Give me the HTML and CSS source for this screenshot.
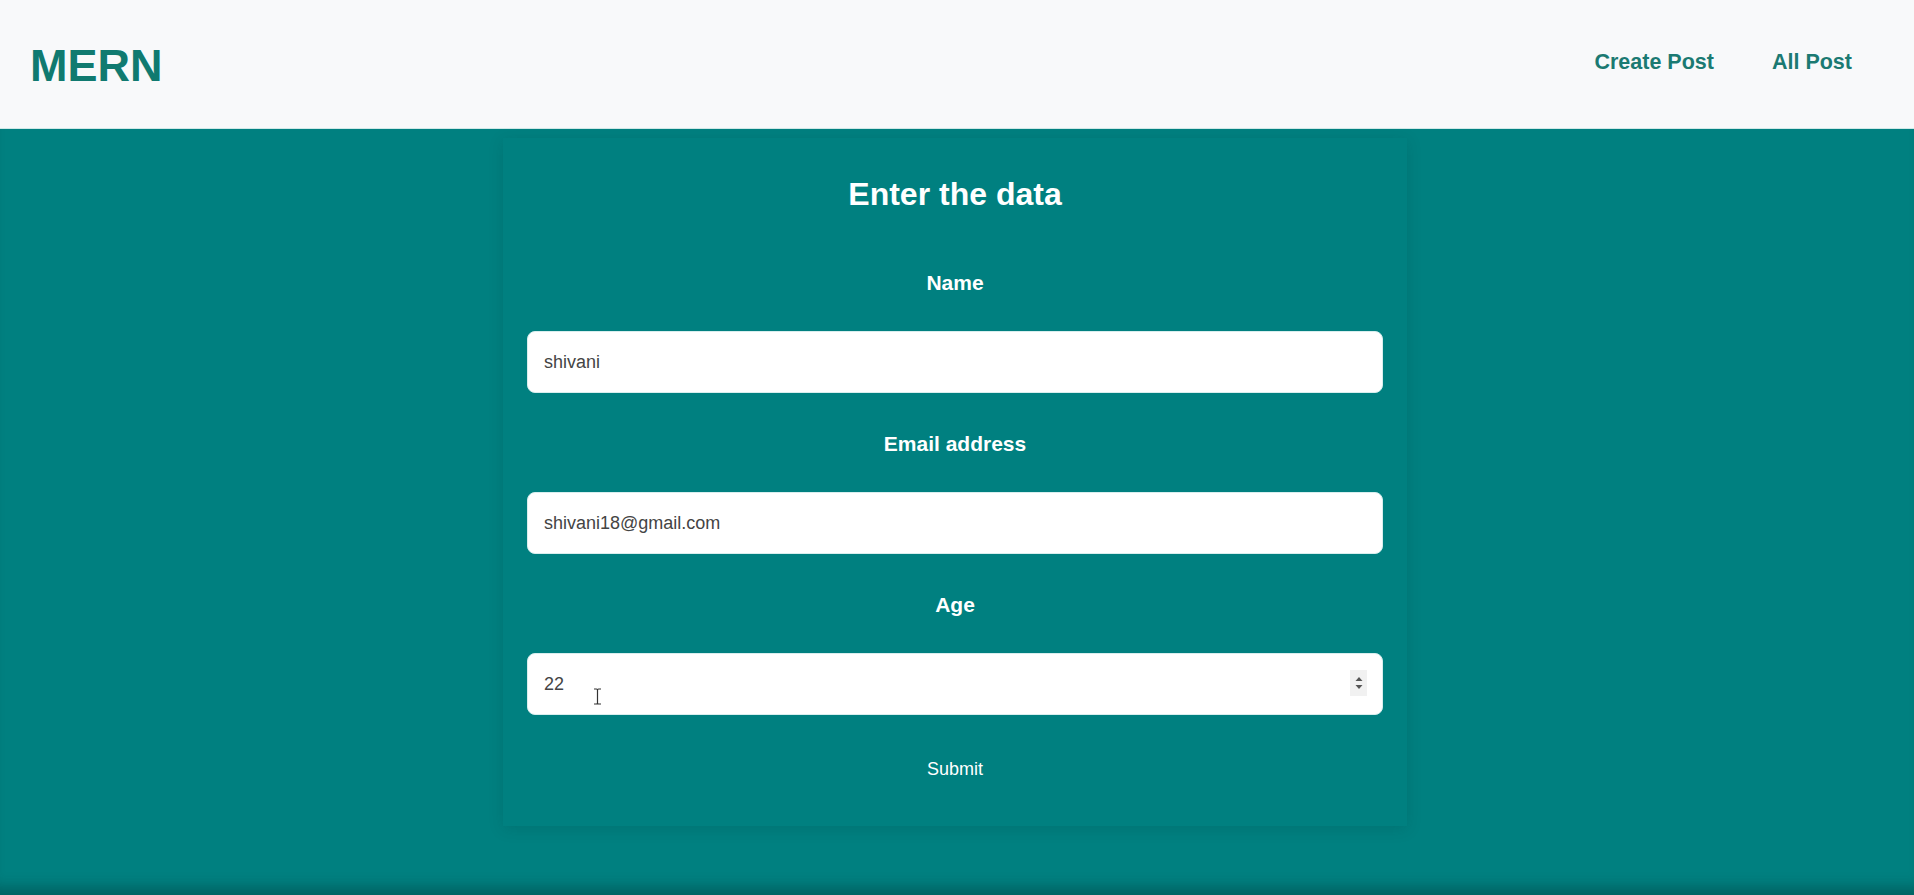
FILE: index.html
```html
<!DOCTYPE html>
<html lang="en">
<head>
<meta charset="utf-8">
<title>MERN</title>
<link rel="stylesheet" href="styles.css">
</head>
<body>
<header class="navbar">
  <a class="brand" href="#">MERN</a>
  <nav class="nav-links">
    <a class="nav-link" href="#">Create Post</a>
    <a class="nav-link" href="#">All Post</a>
  </nav>
</header>
<main class="page">
  <form class="card">
    <h2 class="title">Enter the data</h2>
    <div class="group">
      <label class="label">Name</label>
      <input class="field" type="text" value="shivani">
    </div>
    <div class="group">
      <label class="label">Email address</label>
      <input class="field" type="email" value="shivani18@gmail.com">
    </div>
    <div class="group">
      <label class="label">Age</label>
      <div class="field-wrap">
        <input class="field" type="text" value="22">
        <span class="spinner">
          <svg width="10" height="14" viewBox="0 0 10 14"><path d="M5 1 L8.5 5 L1.5 5 Z" fill="#555"/><path d="M5 13 L8.5 9 L1.5 9 Z" fill="#555"/></svg>
        </span>
        <svg class="ibeam" width="9" height="17" viewBox="0 0 9 17"><path d="M1 1 H3.5 Q4.5 1 4.5 2 V15 Q4.5 16 3.5 16 H1 M8 1 H5.5 Q4.5 1 4.5 2 M4.5 15 Q4.5 16 5.5 16 H8" fill="none" stroke="#333" stroke-width="1.2"/></svg>
      </div>
    </div>
    <button class="submit" type="button">Submit</button>
  </form>
</main>
</body>
</html>
```
FILE: styles.css
```css
* { box-sizing: border-box; }
html, body { margin: 0; padding: 0; }
body {
  font-family: "Liberation Sans", Arial, sans-serif;
  background: #008080;
  height: 895px;
  overflow: hidden;
}
.navbar {
  height: 129px;
  background: #f8f9fa;
  border-bottom: 1px solid #cfe9e7;
  display: flex;
  align-items: center;
  justify-content: space-between;
  padding: 0 62px 0 30px;
}
.brand {
  font-size: 45px;
  font-weight: 700;
  color: #107a70;
  text-decoration: none;
  line-height: 1;
  margin-top: 2px;
}
.nav-links {
  display: flex;
  gap: 58px;
  margin-top: -3px;
}
.nav-link {
  font-size: 21.5px;
  font-weight: 700;
  color: #1b7a72;
  text-decoration: none;
}
.page {
  height: calc(895px - 129px);
  display: flex;
  justify-content: center;
  padding-top: 9px;
  padding-right: 4px;
  box-shadow: inset 0 -18px 14px -10px rgba(0, 40, 40, 0.35);
}
.card {
  width: 904px;
  height: 688px;
  padding: 36px 24px 0;
  background: #008080;
  box-shadow: 0 3px 14px rgba(0, 50, 50, 0.16);
  display: flex;
  flex-direction: column;
  align-items: stretch;
}
.title {
  margin: 0 0 57px;
  text-align: center;
  color: #fff;
  font-size: 32px;
  font-weight: 700;
  line-height: 40px;
}
.group {
  display: flex;
  flex-direction: column;
  margin-bottom: 39px;
}
.group:last-of-type { margin-bottom: 35px; }
.label {
  display: block;
  text-align: center;
  color: #fff;
  font-size: 21px;
  font-weight: 700;
  line-height: 24px;
  margin-bottom: 36px;
}
.field-wrap { position: relative; }
.field {
  width: 100%;
  height: 62px;
  border: 1px solid #d8eeee;
  border-radius: 8px;
  background: #fff;
  padding: 0 16px;
  font-family: "Liberation Sans", Arial, sans-serif;
  font-size: 18px;
  color: #444;
  outline: none;
}
.spinner {
  position: absolute;
  right: 16px;
  top: 17px;
  width: 17px;
  height: 26px;
  background: #f1f1f1;
  display: flex;
  align-items: center;
  justify-content: center;
}
.ibeam {
  position: absolute;
  left: 66px;
  top: 35px;
}
.submit {
  align-self: center;
  background: transparent;
  border: none;
  color: #fff;
  font-family: "Liberation Sans", Arial, sans-serif;
  font-size: 18px;
  line-height: 24px;
  padding: 7px 12px;
}
```
